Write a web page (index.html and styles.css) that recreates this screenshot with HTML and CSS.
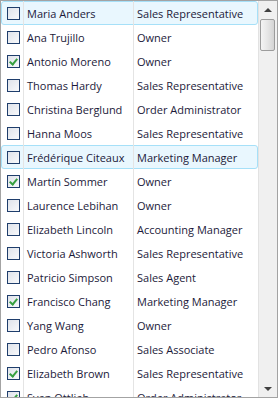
FILE: index.html
```html
<!DOCTYPE html>
<html lang="en">
<head>
    <meta charset="UTF-8">
    <title>Employees</title>
    <link rel="stylesheet" href="styles.css">
</head>
<body>
<div class="grid-box">
    <div class="rows">
        <div class="row selected"><span class="cell check"><span class="box"></span></span><span class="cell name">Maria Anders</span><span class="cell title">Sales Representative</span></div>
        <div class="row"><span class="cell check"><span class="box"></span></span><span class="cell name">Ana Trujillo</span><span class="cell title">Owner</span></div>
        <div class="row"><span class="cell check"><span class="box checked"></span></span><span class="cell name">Antonio Moreno</span><span class="cell title">Owner</span></div>
        <div class="row"><span class="cell check"><span class="box"></span></span><span class="cell name">Thomas Hardy</span><span class="cell title">Sales Representative</span></div>
        <div class="row"><span class="cell check"><span class="box"></span></span><span class="cell name">Christina Berglund</span><span class="cell title">Order Administrator</span></div>
        <div class="row"><span class="cell check"><span class="box"></span></span><span class="cell name">Hanna Moos</span><span class="cell title">Sales Representative</span></div>
        <div class="row selected"><span class="cell check"><span class="box"></span></span><span class="cell name">Frédérique Citeaux</span><span class="cell title">Marketing Manager</span></div>
        <div class="row"><span class="cell check"><span class="box checked"></span></span><span class="cell name">Martín Sommer</span><span class="cell title">Owner</span></div>
        <div class="row"><span class="cell check"><span class="box"></span></span><span class="cell name">Laurence Lebihan</span><span class="cell title">Owner</span></div>
        <div class="row"><span class="cell check"><span class="box"></span></span><span class="cell name">Elizabeth Lincoln</span><span class="cell title">Accounting Manager</span></div>
        <div class="row"><span class="cell check"><span class="box"></span></span><span class="cell name">Victoria Ashworth</span><span class="cell title">Sales Representative</span></div>
        <div class="row"><span class="cell check"><span class="box"></span></span><span class="cell name">Patricio Simpson</span><span class="cell title">Sales Agent</span></div>
        <div class="row"><span class="cell check"><span class="box checked"></span></span><span class="cell name">Francisco Chang</span><span class="cell title">Marketing Manager</span></div>
        <div class="row"><span class="cell check"><span class="box"></span></span><span class="cell name">Yang Wang</span><span class="cell title">Owner</span></div>
        <div class="row"><span class="cell check"><span class="box"></span></span><span class="cell name">Pedro Afonso</span><span class="cell title">Sales Associate</span></div>
        <div class="row"><span class="cell check"><span class="box checked"></span></span><span class="cell name">Elizabeth Brown</span><span class="cell title">Sales Representative</span></div>
        <div class="row"><span class="cell check"><span class="box checked"></span></span><span class="cell name">Sven Ottlieb</span><span class="cell title">Order Administrator</span></div>
    </div>
    <!-- Vertical scrollbar -->
    <div class="scrollbar">
        <div class="arrow up"></div>
        <div class="track"><div class="thumb"></div></div>
        <div class="arrow down"></div>
    </div>
</div>
</body>
</html>
```

FILE: styles.css
```css
/* General Page Styling */
body {
    margin: 0;
    padding: 0;
    background: #fff;
    font-family: 'Open Sans', 'Noto Sans', sans-serif;
    font-size: 11px;
    color: #1c1a3a;
}

/* Grid Box */
.grid-box {
    width: 278px;
    height: 398px;
    box-sizing: border-box;
    border: 1px solid #a3a3a3;
    display: flex;
    overflow: hidden;
    background: #fff;
}

.rows {
    flex: 1;
    overflow: hidden;
}

.row {
    display: flex;
    height: 24px;
    box-sizing: border-box;
    border: 1px solid transparent;
    border-radius: 3px;
}

.row.selected {
    background: #e9f7fe;
    border-color: #a6e0f8;
}

.cell {
    display: flex;
    align-items: center;
    box-sizing: border-box;
    height: 22px;
    margin: 0 0;
}

.check {
    width: 22px;
    justify-content: center;
    border-right: 1px solid #e4e4e4;
    margin-top: -1px;
    height: 24px;
}

.name {
    width: 110px;
    padding-left: 3px;
    border-right: 1px solid #e4e4e4;
    margin-top: -1px;
    height: 24px;
    white-space: nowrap;
}

.title {
    flex: 1;
    padding-left: 3px;
    white-space: nowrap;
}

/* Checkbox */
.box {
    width: 13px;
    height: 13px;
    box-sizing: border-box;
    border: 1px solid #1f3e6c;
    background: linear-gradient(135deg, #dfe3ea, #f8f9fb);
    position: relative;
    margin-left: 2px;
}

.box.checked::after {
    content: "";
    position: absolute;
    left: 3px;
    top: 1px;
    width: 3px;
    height: 6px;
    border-right: 2px solid #37a040;
    border-bottom: 2px solid #37a040;
    transform: rotate(40deg);
}

/* Scrollbar */
.scrollbar {
    width: 18px;
    display: flex;
    flex-direction: column;
    background: #f0f0f0;
    border-left: 1px solid #e2e2e2;
}

.arrow {
    height: 17px;
    display: flex;
    align-items: center;
    justify-content: center;
}

.arrow::after {
    content: "";
    border-left: 4px solid transparent;
    border-right: 4px solid transparent;
}

.arrow.up::after {
    border-bottom: 4px solid #404040;
}

.arrow.down::after {
    border-top: 4px solid #404040;
}

.track {
    flex: 1;
    padding: 1px 0 0 1px;
}

.thumb {
    width: 15px;
    height: 32px;
    box-sizing: border-box;
    border: 1px solid #9c9c9c;
    border-radius: 2px;
    background: linear-gradient(90deg, #f4f4f4, #e6e6e6 50%, #d4d4d4);
}
```
